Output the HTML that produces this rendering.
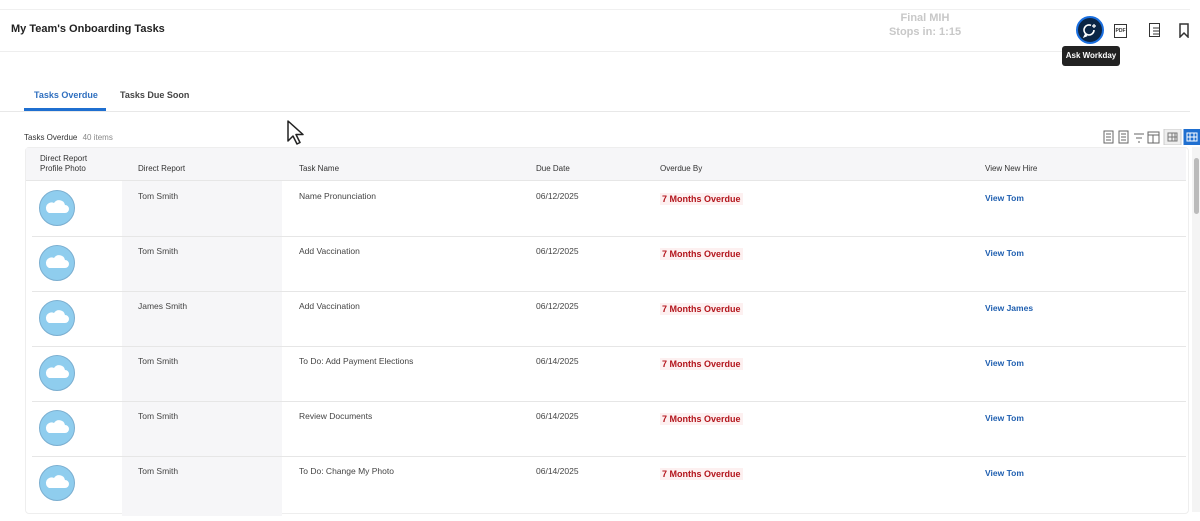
<!DOCTYPE html>
<html><head><style>
body{margin:0;width:1200px;height:521px;overflow:hidden;background:#fff;font-family:"Liberation Sans",Arial,sans-serif;position:relative;color:#333}
.a{position:absolute}
.t{font-size:8.5px;color:#444}
.h{font-size:8px;color:#333}
.od{font-size:9px;font-weight:bold;color:#b3151c;background:#fdf0f0;padding:1px 2px}
.v{font-size:8.5px;color:#1f5fb0;font-weight:bold}
.av{width:34px;height:34px;border-radius:50%;background:#8fcdee;border:1px solid #7aaed0}
</style></head><body>
<div class="a" style="left:0;top:9px;width:1190px;height:1px;background:#f0f0f0"></div>
<div class="a" style="left:11px;top:23px;font-size:11px;font-weight:bold;color:#222">My Team's Onboarding Tasks</div>
<div class="a" style="left:880px;top:11px;width:90px;text-align:center;font-size:11px;font-weight:bold;color:#c8c8c8;line-height:14px">Final MIH<br>Stops in: 1:15</div>
<div class="a" style="left:1076px;top:16px;width:28px;height:28px;border-radius:50%;background:#0b2545;border:2px solid #1a6fe0;box-sizing:border-box"></div>
<svg class="a" style="left:1082px;top:22px" width="16" height="16" viewBox="0 0 16 16" fill="none" stroke="#fff" stroke-width="1.6"><path d="M12 8a5 5 0 1 1-3-4.6M3.5 12.5L2.5 14.5 5 13.5"/><path d="M12 2v4M10 4h4" stroke-width="1.2"/></svg>
<div class="a" style="left:1114px;top:24px;width:13px;height:14px;border:1.3px solid #333;box-sizing:border-box;font-size:5px;font-weight:bold;line-height:12px;text-align:center">PDF</div>
<div class="a" style="left:1149px;top:23px;width:11px;height:14px;border:1.3px solid #333;box-sizing:border-box"></div>
<svg class="a" style="left:1150px;top:24px" width="14" height="14"><path d="M3 4h6M3 7h6M3 10h6" stroke="#333"/></svg>
<svg class="a" style="left:1178px;top:23px" width="12" height="15"><path d="M2 1h8v13l-4-4-4 4z" fill="none" stroke="#333" stroke-width="1.5"/></svg>
<div class="a" style="left:1062px;top:46px;width:58px;height:20px;background:#222;border-radius:3px;color:#fff;font-size:8px;font-weight:bold;line-height:20px;text-align:center">Ask Workday</div>
<div class="a" style="left:0;top:51px;width:1062px;height:1px;background:#eee"></div>
<div class="a" style="left:34px;top:90px;font-size:9px;font-weight:bold;color:#2f6fbf">Tasks Overdue</div>
<div class="a" style="left:120px;top:90px;font-size:9px;font-weight:bold;color:#444">Tasks Due Soon</div>
<div class="a" style="left:24px;top:108px;width:82px;height:3px;background:#1f6fd0"></div>
<div class="a" style="left:0;top:111px;width:1190px;height:1px;background:#e8e8e8"></div>
<svg class="a" style="left:286px;top:119px" width="20" height="28"><path d="M2 2v20l5-5 4 8 3-1.5-4-8h7z" fill="#fff" stroke="#222" stroke-width="1.5" stroke-linejoin="round"/></svg>
<div class="a" style="left:24px;top:133px;font-size:8px;color:#333">Tasks Overdue <span style="color:#888;margin-left:3px">40 items</span></div>
<svg class="a" style="left:1100px;top:129px" width="100" height="16" fill="none" stroke="#666"><rect x="4" y="2" width="9" height="12"/><rect x="19" y="2" width="9" height="12"/><path d="M6 5h5M6 8h5M6 11h5M21 5h5M21 8h5M21 11h5M34 5h10M36 9h6M38 13h2"/><rect x="48" y="3" width="11" height="11"/><path d="M48 6h11M53 6v8"/><rect x="64" y="0" width="17" height="16" fill="#eee" stroke="#ccc"/><path d="M68 4h9v8h-9zM68 8h9M72 4v8M75 4v8" stroke="#777"/><rect x="84" y="0" width="16" height="16" fill="#1f6fd0" stroke="#1f6fd0"/><path d="M87 4h10v8h-10zM87 8h10M90 4v8M94 4v8" stroke="#fff"/></svg>
<div class="a" style="left:25px;top:147px;width:1162px;height:365px;border:1px solid #eee;border-radius:4px"></div>
<div class="a" style="left:26px;top:148px;width:1160px;height:32px;background:#f6f6f8;border-bottom:1px solid #e6e6e6"></div>
<div class="a" style="left:122px;top:181px;width:160px;height:335px;background:#f6f6f8"></div>
<div class="a h" style="left:40px;top:154px;line-height:10px">Direct Report<br>Profile Photo</div>
<div class="a h" style="left:138px;top:164px">Direct Report</div>
<div class="a h" style="left:299px;top:164px">Task Name</div>
<div class="a h" style="left:536px;top:164px">Due Date</div>
<div class="a h" style="left:660px;top:164px">Overdue By</div>
<div class="a h" style="left:985px;top:164px">View New Hire</div>
<div id="rows"></div>
<div class="a" style="left:1192px;top:147px;width:8px;height:365px;background:#f4f4f4"></div>
<div class="a" style="left:1194px;top:158px;width:5px;height:56px;background:#bbb;border-radius:3px"></div>
<script>
var d=[["Tom Smith","Name Pronunciation","06/12/2025","Tom"],["Tom Smith","Add Vaccination","06/12/2025","Tom"],["James Smith","Add Vaccination","06/12/2025","James"],["Tom Smith","To Do: Add Payment Elections","06/14/2025","Tom"],["Tom Smith","Review Documents","06/14/2025","Tom"],["Tom Smith","To Do: Change My Photo","06/14/2025","Tom"]];
var h="";d.forEach(function(r,i){var y=181+i*55;
h+='<div class="a av" style="left:39px;top:'+(y+9)+'px"></div><svg class="a" style="left:44px;top:'+(y+18)+'px" width="26" height="16"><path d="M5 14h16a4 4 0 0 0 0-8 6 6 0 0 0-11-2 5 5 0 0 0-5 10z" fill="#fff"/></svg>';
h+='<div class="a t" style="left:138px;top:'+(y+10)+'px">'+r[0]+'</div><div class="a t" style="left:299px;top:'+(y+10)+'px">'+r[1]+'</div><div class="a t" style="left:536px;top:'+(y+10)+'px">'+r[2]+'</div><div class="a od" style="left:660px;top:'+(y+12)+'px">7 Months Overdue</div><div class="a v" style="left:985px;top:'+(y+12)+'px">View '+r[3]+'</div>';
if(i>0)h+='<div class="a" style="left:32px;top:'+y+'px;width:1154px;height:1px;background:#e6e6e6"></div>';});
document.getElementById("rows").innerHTML=h;
</script>
</body></html>
